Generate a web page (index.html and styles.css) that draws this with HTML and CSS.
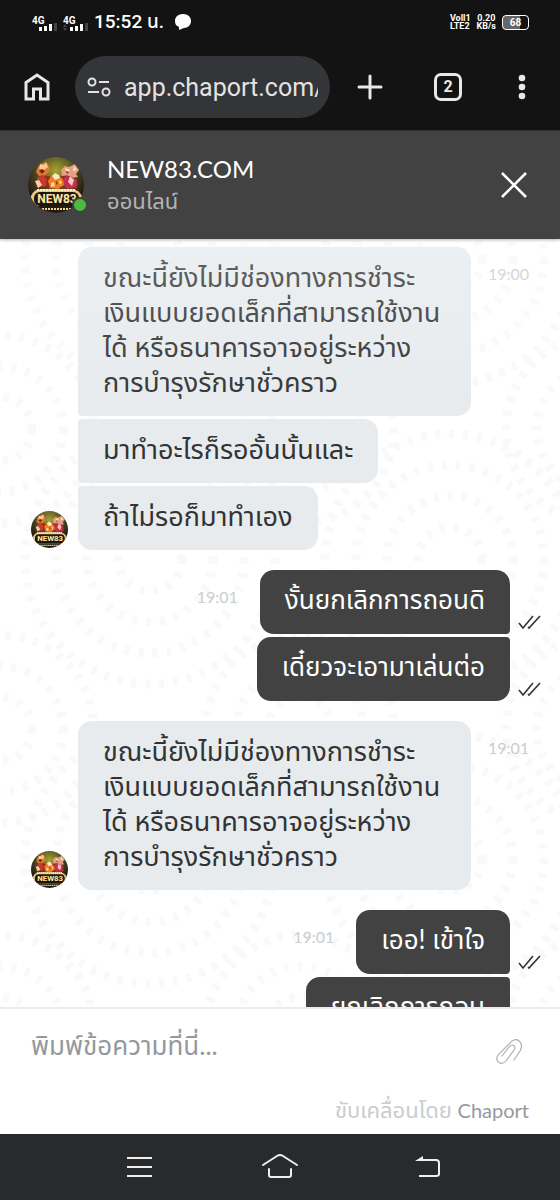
FILE: index.html
```html
<!DOCTYPE html>
<html lang="th">
  <head>
    <meta charset="UTF-8" />
    <meta name="viewport" content="width=device-width, initial-scale=1" />
    <title>NEW83.COM</title>
    <link rel="stylesheet" href="styles.css">
  </head>
  <body>
    <!-- shared drawings -->
    <svg class="defs" aria-hidden="true">
      <defs>
        <radialGradient id="glow" cx="50%" cy="25%" r="60%">
          <stop offset="0" stop-color="#a5a432" />
          <stop offset="0.6" stop-color="#4b4620" />
          <stop offset="1" stop-color="#211b14" />
        </radialGradient>
        <clipPath id="round"><circle cx="28" cy="28" r="28" /></clipPath>
        <symbol id="logo" viewBox="0 0 56 56">
          <g clip-path="url(#round)">
            <rect width="56" height="56" fill="url(#glow)" />
            <path d="M8 30l3-9 7-2 9 1 9-1 7 1 7 6-1 6z" fill="#8d2c22" />
            <path d="M8 15l2-5 3-3 5-2 3 4 1 5-5 4-6 1z" fill="#e07a35" />
            <path d="M12 7l4 1 2-3 2 5-4 3-5-1z" fill="#f9c98f" />
            <path d="M11 14l3-2 3 2-3 3z" fill="#7a2217" />
            <path d="M9 21l5-3 5 4-1 7-7 1z" fill="#c93a28" />
            <path d="M7 24l4-1 3 5-4 3z" fill="#f4d2b0" />
            <path d="M33 13l4-4 4 1 6-3 4 6-3 4 2 3-6 1-5-3-5 1z" fill="#e5a083" />
            <path d="M37 11l5 2-3 3zM46 9l3 4-4 1z" fill="#fbe2c8" />
            <path d="M38 14l3 1-2 2z" fill="#7d2320" />
            <path d="M36 20l6-1 7 4-1 7-9 2-4-5z" fill="#c22f55" />
            <path d="M42 19l4 4-2 6-4-4z" fill="#f2cdb2" />
            <path d="M20 24l3-5 6-1 6 4 1 6-6 4-8-1z" fill="#ee7d1f" />
            <path d="M24 19l3-3 4 2 1 3-5 2z" fill="#f8e9c5" />
            <path d="M23 26l3-1 1 4-4 1zM31 23l3 2-2 3z" fill="#fbd894" />
            <path d="M28 24l2 2-2 2z" fill="#8b2e1a" />
            <path d="M3 49V39q3-7 10-7h31q7 1 10 7v10z" fill="#e4c983" />
            <path d="M9 33h38" stroke="#fff3c6" stroke-width="2" stroke-dasharray="2 1" />
            <rect x="6" y="35" width="45" height="14" rx="6" fill="#20150c" />
            <text x="29" y="46" class="logo-text">NEW83</text>
            <path d="M14 52h30" stroke="#f5d88b" stroke-width="2" stroke-dasharray="2 1" />
          </g>
        </symbol>
        <symbol id="checks" viewBox="0 0 24 16">
          <path d="M1 9l4 5L15 2M10 13l1 1L22 2" fill="none" stroke="#333" stroke-width="1.6" />
        </symbol>
      </defs>
    </svg>

    <div class="status">
      <div class="status-left">
        <svg class="signals" viewBox="0 0 56 20">
          <g class="net-label"><text x="0" y="9">4G</text><text x="31" y="9">4G</text></g>
          <path d="M7 16v-4h3v4zM12 16v-5h3v5zM17 16V9h3v7zM38 16v-4h3v4zM43 16v-5h3v5zM48 16V9h3v7z" fill="#fff" />
          <path d="M22 16V8h3v8zM53 16V8h3v8zM31 12l2-3 2 3zM31 13h4l-2 3z" fill="#444" />
        </svg>
        <span class="clock">15:52 น.</span>
        <svg class="bubble-icon" viewBox="0 0 18 18"><path d="M9 1c5 0 8 3 8 7s-3 7-7 7l-5 2v-3C2 13 1 11 1 8c0-4 3-7 8-7z" fill="#fff" /></svg>
      </div>
      <div class="status-right">
        <span>Voll1<br>LTE2</span>
        <span class="speed">0.20<br>KB/s</span>
        <span class="battery">68</span>
      </div>
    </div>

    <nav class="browser">
      <button class="icon-btn" aria-label="Home">
        <svg width="28" height="32" viewBox="0 0 28 32"><path d="M3 11.500L14 4l11 7.500V28h-7.500V18h-7v10H3z" fill="none" stroke="#e8e8e8" stroke-width="3" /></svg>
      </button>
      <div class="address">
        <svg width="24" height="20" viewBox="0 0 24 20" fill="none" stroke="#e3e3e3" stroke-width="2"><circle cx="5" cy="5" r="3.500" /><path d="M12 5h10M1 15h11" /><circle cx="19" cy="15" r="3.500" /></svg>
        <input type="text" aria-label="Address" value="app.chaport.com/">
      </div>
      <button class="icon-btn" aria-label="New tab">
        <svg width="28" height="28" viewBox="0 0 28 28"><path d="M14 3v22M3 14h22" stroke="#e8e8e8" stroke-width="3" stroke-linecap="round" /></svg>
      </button>
      <button class="icon-btn tabs" aria-label="Tabs">2</button>
      <button class="icon-btn" aria-label="More">
        <svg width="8" height="28" viewBox="0 0 8 28" fill="#e8e8e8"><circle cx="4" cy="5" r="3.300" /><circle cx="4" cy="14" r="3.300" /><circle cx="4" cy="23" r="3.300" /></svg>
      </button>
    </nav>

    <header class="chat-header">
      <div class="operator">
        <svg class="logo"><use href="#logo" /></svg>
        <span class="online"></span>
      </div>
      <div class="who">
        <h1>NEW83.COM</h1>
        <p>ออนไลน์</p>
      </div>
      <button class="icon-btn" aria-label="Close">
        <svg width="28" height="28" viewBox="0 0 28 28"><path d="M2 2l24 24M26 2L2 26" stroke="#fff" stroke-width="2.600" /></svg>
      </button>
    </header>

    <main class="chat">
      <section class="group">
        <svg class="avatar"><use href="#logo" /></svg>
        <div class="messages">
          <p class="msg">ขณะนี้ยังไม่มีช่องทางการชำระเงินแบบยอดเล็กที่สามารถใช้งานได้ หรือธนาคารอาจอยู่ระหว่างการบำรุงรักษาชั่วคราว</p>
          <p class="msg">มาทำอะไรก็รออั้นนั้นและ</p>
          <p class="msg">ถ้าไม่รอก็มาทำเอง</p>
        </div>
        <time>19:00</time>
      </section>

      <section class="own">
        <div class="row">
          <time>19:01</time>
          <p class="msg">งั้นยกเลิกการถอนดิ</p>
          <svg class="ticks"><use href="#checks" /></svg>
        </div>
        <div class="row">
          <p class="msg">เดี๋ยวจะเอามาเล่นต่อ</p>
          <svg class="ticks"><use href="#checks" /></svg>
        </div>
      </section>

      <section class="group">
        <svg class="avatar"><use href="#logo" /></svg>
        <div class="messages">
          <p class="msg">ขณะนี้ยังไม่มีช่องทางการชำระเงินแบบยอดเล็กที่สามารถใช้งานได้ หรือธนาคารอาจอยู่ระหว่างการบำรุงรักษาชั่วคราว</p>
        </div>
        <time>19:01</time>
      </section>

      <section class="own">
        <div class="row">
          <time>19:01</time>
          <p class="msg">เออ! เข้าใจ</p>
          <svg class="ticks"><use href="#checks" /></svg>
        </div>
        <div class="row">
          <p class="msg">ยกเลิกการถอน</p>
          <svg class="ticks"><use href="#checks" /></svg>
        </div>
      </section>
    </main>

    <footer class="composer">
      <div class="entry">
        <input type="text" aria-label="Message" placeholder="พิมพ์ข้อความที่นี่...">
        <button class="icon-btn" aria-label="Attach">
          <svg width="30" height="30" viewBox="0 0 30 30"><path d="M20 25l6-9c5-8-4-16-10-8L4 20c-4 7 4 11 8 6l8-11c3-4-2-7-5-3l-7 9" fill="none" stroke="#aab0b4" stroke-width="1.200" stroke-linecap="round" /></svg>
        </button>
      </div>
      <p class="powered">ขับเคลื่อนโดย <a href="#">Chaport</a></p>
    </footer>

    <nav class="system">
      <button class="icon-btn" aria-label="Recent apps">
        <svg width="36" height="28" viewBox="0 0 36 28"><path d="M8 5h25M8 14h25M8 23h25" stroke="#eee" stroke-width="2" /></svg>
      </button>
      <button class="icon-btn" aria-label="Home screen">
        <svg width="36" height="28" viewBox="0 0 36 28" fill="none" stroke="#eee" stroke-width="2" stroke-linecap="round" stroke-linejoin="round"><path d="M1 12l14-9q3-2 6 0l14 9M7 16v6q0 2 2 2h18q2 0 2-2v-6" /></svg>
      </button>
      <button class="icon-btn" aria-label="Back">
        <svg width="36" height="28" viewBox="0 0 36 28"><path d="M13 7h18q3 0 3 3v11q0 2-3 2H14" fill="none" stroke="#eee" stroke-width="2" /><path d="M10 8l8-5v5z" fill="#eee" /></svg>
      </button>
    </nav>
  </body>
</html>
```
FILE: styles.css
```css
* {
  box-sizing: border-box;
}
body {
  display: flex;
  flex-direction: column;
  height: 100vh;
  margin: 0;
  background-color: #ffffff;
  font-family: Lato, "Noto Sans Thai", "Noto Sans", sans-serif;
}
h1,
p {
  margin: 0;
}
.defs {
  display: block;
  width: 0;
  height: 0;
}
.logo-text {
  fill: #ffe9a6;
  font: 700 12px Roboto, sans-serif;
  text-anchor: middle;
}
.icon-btn {
  display: flex;
  flex: none;
  padding: 0;
  border: 0;
  background: none;
  color: inherit;
  cursor: pointer;
}

/* phone status bar */
.status {
  display: flex;
  flex: none;
  align-items: center;
  justify-content: space-between;
  height: 44px;
  padding: 0 31px 0 32px;
  background-color: #131313;
  color: #ffffff;
  font-family: Roboto, "Noto Sans Thai", sans-serif;
}
.status-left,
.status-right {
  display: flex;
  align-items: center;
}
.signals {
  width: 56px;
  height: 20px;
  margin: 6px 6px 0 0;
}
.net-label {
  fill: #ffffff;
  font: 700 10px Roboto, sans-serif;
}
.clock {
  font-size: 19px;
  font-weight: 500;
}
.bubble-icon {
  width: 18px;
  height: 18px;
  margin-left: 10px;
}
.status-right {
  gap: 6px;
  font-size: 9px;
  font-weight: 700;
  line-height: 8px;
}
.speed {
  text-align: center;
}
.battery {
  width: 27px;
  height: 15px;
  border: 1px solid #ffffff;
  border-radius: 4px;
  background: linear-gradient(90deg, #666666 68%, #131313 68%);
  font-size: 10px;
  line-height: 13px;
  text-align: center;
}

/* browser bar */
.browser {
  display: flex;
  flex: none;
  align-items: center;
  height: 86px;
  padding: 0 34px 0 23px;
  background-color: #131313;
  color: #e8e8e8;
}
.address {
  display: flex;
  flex: 1;
  align-items: center;
  gap: 13px;
  min-width: 0;
  height: 62px;
  margin: 0 26px 0 24px;
  padding: 0 12px;
  border-radius: 31px;
  background-color: #343538;
}
.address svg {
  flex: none;
}
.address input {
  flex: 1;
  min-width: 0;
  padding: 0;
  border: 0;
  outline: 0;
  background: none;
  color: #e3e3e3;
  font: 25px Roboto, sans-serif;
}
.tabs {
  justify-content: center;
  width: 28px;
  height: 28px;
  margin: 0 56px 0 50px;
  border: 3px solid #e8e8e8;
  border-radius: 7px;
  font: 700 16px/22px Roboto, sans-serif;
}

/* chat header */
.chat-header {
  z-index: 1;
  display: flex;
  flex: none;
  align-items: center;
  height: 109px;
  padding: 0 32px 0 28px;
  border-top: 1px solid #303030;
  background-color: #424242;
  box-shadow: 0 1px 3px rgba(0, 0, 0, 0.3);
  color: #ffffff;
}
.operator {
  position: relative;
}
.logo {
  display: block;
  width: 56px;
  height: 56px;
}
.online {
  position: absolute;
  right: -4px;
  bottom: 0;
  width: 16px;
  height: 16px;
  border: 2px solid #424242;
  border-radius: 50%;
  background-color: #4cbb3c;
}
.who {
  flex: 1;
  padding-left: 23px;
}
.who h1 {
  font-size: 24px;
  font-weight: 400;
  line-height: 32px;
}
.who p {
  color: #b4b4b4;
  font-size: 22px;
  line-height: 32px;
}

/* messages */
.chat {
  position: relative;
  display: flex;
  flex: 1;
  flex-direction: column;
  gap: 20px;
  min-height: 0;
  padding: 8px 18px 0 31px;
  overflow: hidden;
  background-image: url("data:image/svg+xml,%3Csvg xmlns='http://www.w3.org/2000/svg' width='300' height='300' fill='none' stroke='%23f9f9f9' stroke-width='9' stroke-dasharray='5 9'%3E%3Ccircle cx='150' cy='20' r='32'/%3E%3Ccircle cx='150' cy='20' r='63'/%3E%3Ccircle cx='150' cy='20' r='94'/%3E%3Ccircle cx='150' cy='20' r='125'/%3E%3Ccircle cx='0' cy='190' r='32'/%3E%3Ccircle cx='0' cy='190' r='63'/%3E%3Ccircle cx='0' cy='190' r='94'/%3E%3Ccircle cx='300' cy='190' r='32'/%3E%3Ccircle cx='300' cy='190' r='63'/%3E%3Ccircle cx='300' cy='190' r='94'/%3E%3Ccircle cx='150' cy='320' r='32'/%3E%3Ccircle cx='150' cy='320' r='63'/%3E%3Ccircle cx='150' cy='320' r='94'/%3E%3Ccircle cx='150' cy='320' r='125'/%3E%3C/svg%3E");
}
/* older messages fade out towards the header */
.chat::after {
  position: absolute;
  top: 0;
  right: 0;
  left: 0;
  height: 170px;
  background: linear-gradient(rgba(255, 255, 255, 0.25), rgba(255, 255, 255, 0));
  content: "";
  pointer-events: none;
}
.group {
  display: flex;
  flex: none;
  align-items: flex-end;
  padding-right: 13px;
}
.avatar {
  flex: none;
  width: 37px;
  height: 37px;
  margin: 0 10px 2px 0;
}
.messages,
.own {
  display: flex;
  flex: none;
  flex-direction: column;
  align-items: flex-start;
  gap: 3px;
}
.messages {
  flex: 0 1 auto;
  max-width: 393px;
}
.own {
  align-items: flex-end;
}
.row {
  display: flex;
  align-items: flex-end;
}
.msg {
  padding: 12px 25px 17px;
  border-radius: 4px 14px 14px 4px;
  background-color: #e7ebee;
  color: #333333;
  font-size: 27px;
  line-height: 35px;
}
.msg:first-child {
  border-top-left-radius: 14px;
}
.messages .msg:last-child {
  border-bottom-left-radius: 14px;
}
.chat time {
  align-self: flex-start;
  margin-left: auto;
  padding: 14px 0;
  color: #c8cdd0;
  font-size: 16px;
  line-height: 26px;
}
.row time {
  margin-right: 22px;
}
.row .msg {
  border-radius: 14px 4px 4px 14px;
  background-color: #424242;
  color: #ffffff;
  font-size: 26px;
}
.row:first-child .msg {
  border-top-right-radius: 14px;
}
.row:first-child:last-child .msg,
.own:not(:last-child) .row:last-child .msg {
  border-bottom-right-radius: 14px;
}
.ticks {
  width: 24px;
  height: 16px;
  margin: 0 0 4px 8px;
}

/* composer */
.composer {
  flex: none;
  height: 127px;
  padding: 16px 31px 0;
  border-top: 2px solid #ececec;
  background-color: #ffffff;
}
.entry {
  display: flex;
  align-items: center;
  padding-right: 5px;
}
.entry input {
  flex: 1;
  min-width: 0;
  height: 40px;
  padding: 0;
  border: 0;
  outline: 0;
  color: #333333;
  font: inherit;
  font-size: 26px;
}
.entry input::placeholder {
  color: #94999c;
}
.entry svg {
  margin-top: 10px;
}
.powered {
  margin-top: 30px;
  color: #c8cdd0;
  font-size: 22px;
  line-height: 30px;
  text-align: right;
}
.powered a {
  color: #94999c;
  font-size: 20px;
  text-decoration: none;
}

/* phone buttons */
.system {
  display: flex;
  flex: none;
  align-items: center;
  justify-content: center;
  gap: 107px;
  height: 66px;
  background-color: #292a2c;
}
```
